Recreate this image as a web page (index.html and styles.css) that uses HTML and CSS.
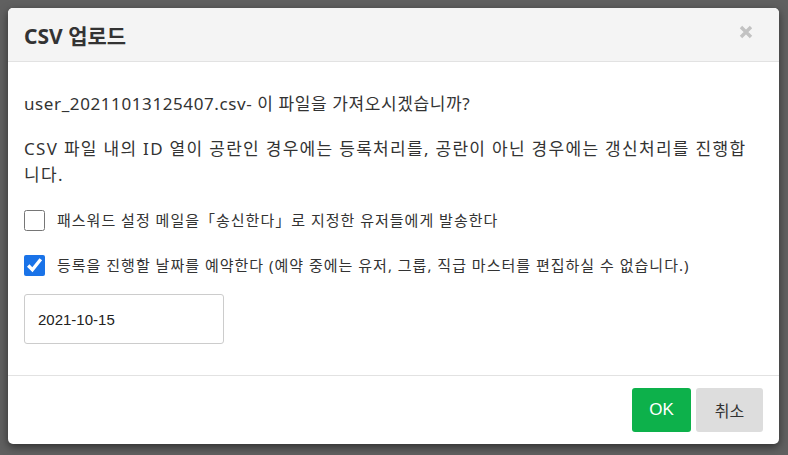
FILE: index.html
```html
<!DOCTYPE html>
<html lang="ko">
<head>
    <meta charset="UTF-8">
    <meta name="viewport" content="width=device-width, initial-scale=1.0">
    <title>CSV 업로드</title>
    <link rel="stylesheet" href="styles.css">
</head>
<body>
    <div class="backdrop">
        <div class="modal">
            <div class="modal-header">
                <h2>CSV 업로드</h2>
                <span class="close">
                    <svg width="14" height="14" viewBox="0 0 14 14"><path d="M2 2L12 12M12 2L2 12" stroke="#c2c2c2" stroke-width="3.4" stroke-linecap="butt"/></svg>
                </span>
            </div>
            <div class="modal-body">
                <p>user_20211013125407.csv- 이 파일을 가져오시겠습니까?</p>
                <p class="last">CSV 파일 내의 ID 열이 공란인 경우에는 등록처리를, 공란이 아닌 경우에는 갱신처리를 진행합니다.</p>
                <label class="check-row">
                    <input type="checkbox">
                    <span>패스워드 설정 메일을「송신한다」로 지정한 유저들에게 발송한다</span>
                </label>
                <label class="check-row second">
                    <input type="checkbox" checked>
                    <span>등록을 진행할 날짜를 예약한다 (예약 중에는 유저, 그룹, 직급 마스터를 편집하실 수 없습니다.)</span>
                </label>
                <input type="text" class="date-input" value="2021-10-15">
            </div>
            <div class="modal-footer">
                <button class="btn btn-ok">OK</button>
                <button class="btn btn-cancel">취소</button>
            </div>
        </div>
    </div>
</body>
</html>
```

FILE: styles.css
```css
html, body {
    margin: 0;
    height: 100%;
}
body {
    font-family: "Noto Sans", "Noto Sans CJK KR", sans-serif;
    color: #333333;
    background: #606060;
}
.backdrop {
    box-sizing: border-box;
    height: 100%;
    padding: 8px 9px 11px 8px;
    background: #606060;
}
.modal {
    height: 100%;
    display: flex;
    flex-direction: column;
    background: #ffffff;
    border-radius: 5px;
    overflow: hidden;
    box-shadow: 0 3px 8px rgba(0, 0, 0, 0.5);
}
.modal-header {
    height: 54px;
    box-sizing: border-box;
    display: flex;
    align-items: center;
    justify-content: space-between;
    padding: 0 26px 0 16px;
    background: #f4f4f4;
    border-bottom: 1px solid #e2e2e2;
}
.modal-header h2 {
    margin: 0;
    font-size: 21px;
    font-weight: 700;
    color: #333333;
}
.close {
    display: flex;
    margin-top: -6px;
}
.modal-body {
    flex: 1;
    padding: 29px 16px 0 16px;
}
.modal-body p {
    margin: 0 0 19px;
    font-size: 17px;
    line-height: 26px;
    letter-spacing: 0.6px;
}
.modal-body p.last {
    margin-bottom: 21px;
    letter-spacing: 1.3px;
}
.check-row {
    display: flex;
    align-items: center;
    gap: 12px;
    font-size: 15px;
    letter-spacing: 1px;
    line-height: 22px;
    margin-bottom: 23px;
}
.check-row.second {
    margin-bottom: 18px;
}
.check-row input {
    margin: 0;
    width: 21px;
    height: 21px;
    accent-color: #1a73e8;
}
.date-input {
    box-sizing: border-box;
    width: 200px;
    height: 50px;
    padding: 0 13px;
    border: 1px solid #cccccc;
    border-radius: 3px;
    font-family: "Liberation Sans", Arial, sans-serif;
    font-size: 15px;
    color: #222222;
}
.modal-footer {
    display: flex;
    justify-content: flex-end;
    gap: 5px;
    padding: 12px 16px;
    border-top: 1px solid #e2e2e2;
}
.btn {
    height: 44px;
    border: none;
    border-radius: 3px;
    font-size: 16px;
    cursor: pointer;
}
.btn-ok {
    width: 59px;
    background: #0db14b;
    color: #ffffff;
    font-family: "Liberation Sans", Arial, sans-serif;
    font-size: 17px;
}
.btn-cancel {
    width: 67px;
    background: #dddddd;
    color: #333333;
    font-family: "Noto Sans CJK KR", sans-serif;
}
```
